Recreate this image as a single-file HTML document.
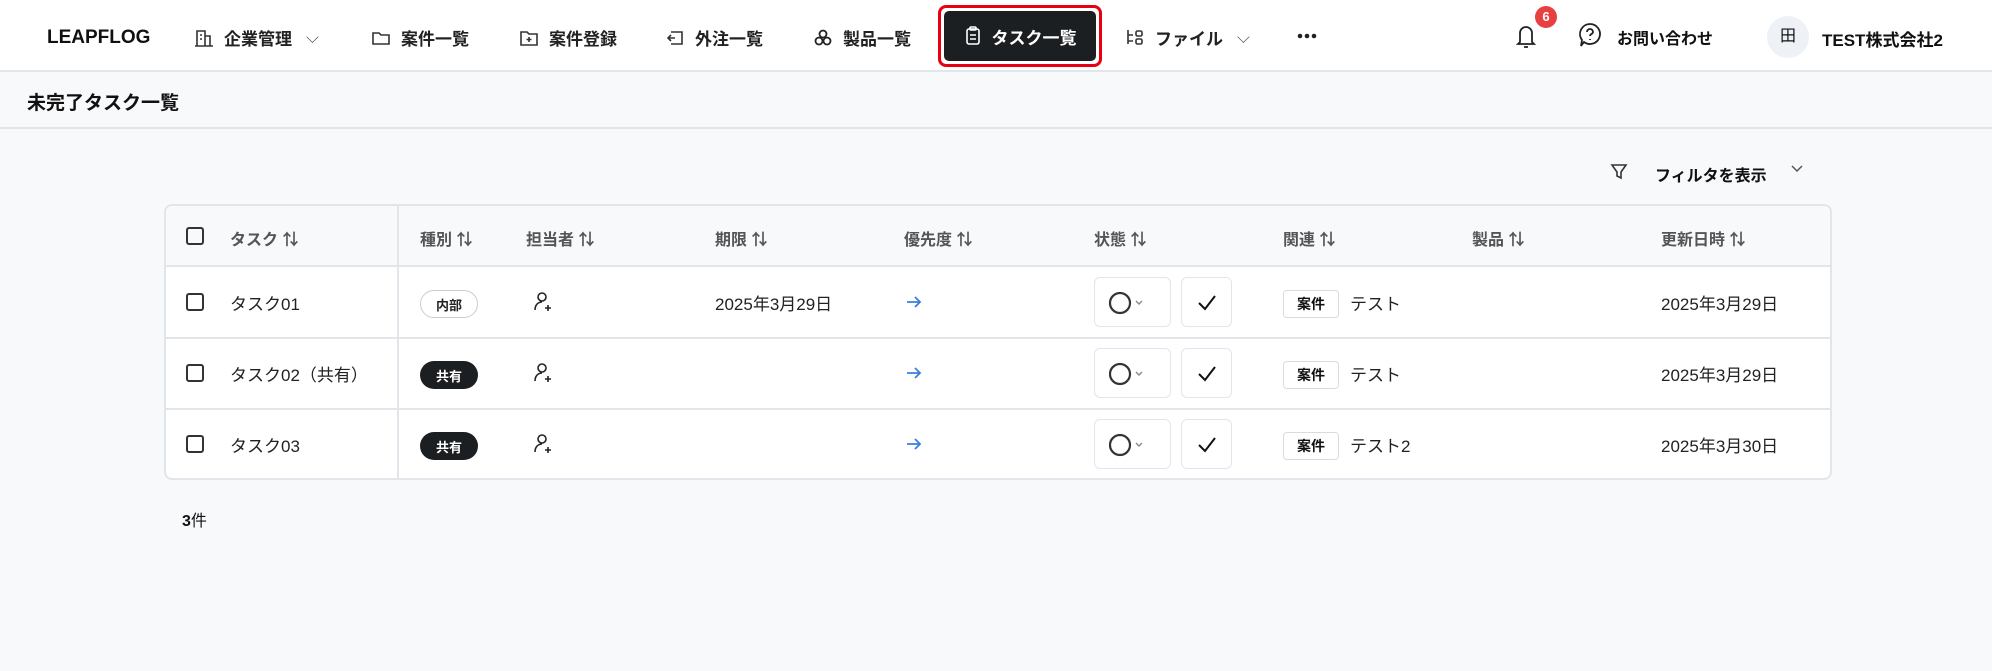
<!DOCTYPE html>
<html><head><meta charset="utf-8"><style>
*{box-sizing:border-box;margin:0;padding:0}
body{width:1992px;height:671px;background:#f8f9fb;font-family:"Liberation Sans","Noto Sans CJK JP",sans-serif;color:#111;position:relative;overflow:hidden;font-size:17px}
.a{position:absolute;white-space:nowrap}
.nav{position:absolute;left:0;top:0;width:1992px;height:72px;background:#fff;border-bottom:2px solid #e2e6ea}
.ni{position:absolute;top:25px;font-size:17px;font-weight:700;display:flex;align-items:center;gap:10px;color:#222}
svg{display:block}
.title{position:absolute;left:0;top:72px;width:1992px;height:57px;border-bottom:2px solid #e2e6ea;background:#f8f9fb}
.tbl{position:absolute;left:164px;top:204px;width:1668px;height:276px;border:2px solid #e2e6ea;border-radius:8px;background:#fff;overflow:hidden}
.hd{position:absolute;left:0;top:0;width:100%;height:61px;background:#f8f9fb;border-bottom:2px solid #e2e6ea}
.rl{position:absolute;left:0;width:100%;height:2px;background:#e2e6ea}
.h{position:absolute;top:20px;font-size:16px;color:#555;font-weight:700}
.cb{position:absolute;width:18px;height:18px;border:2px solid #333;border-radius:3px}
.tx{position:absolute;font-size:17px;color:#222}
.bd{position:absolute;width:58px;height:28px;border-radius:14px;font-size:13px;font-weight:700;display:flex;align-items:center;justify-content:center}
.sb{position:absolute;border:1.5px solid #e2e6ea;border-radius:6px;height:50px;background:#fff}
.kb{position:absolute;width:56px;height:28px;border:1.5px solid #d8dce0;border-radius:4px;font-size:14px;font-weight:700;display:flex;align-items:center;justify-content:center;background:#fff}
</style></head><body>
<div class="nav">
<div class="a" style="left:47px;top:27px;font-size:19px;font-weight:700">LEAPFLOG</div>
<div class="ni" style="left:194px"><svg width="20" height="20" viewBox="0 0 20 20" fill="none" stroke="#333" stroke-width="1.6"><path d="M3 18V3h8v15M11 8h5v10M1 18h18M6 7h2M6 11h2"/></svg>企業管理<span style="font-weight:400;color:#555;margin-left:4px">⌵</span></div>
<div class="ni" style="left:371px"><svg width="20" height="20" viewBox="0 0 20 20" fill="none" stroke="#333" stroke-width="1.6"><path d="M2 5h6l2 2h8v9H2z"/></svg>案件一覧</div>
<div class="ni" style="left:519px"><svg width="20" height="20" viewBox="0 0 20 20" fill="none" stroke="#333" stroke-width="1.6"><path d="M2 4h6l2 2h8v11H2zM10 9v5M7.5 11.5h5"/></svg>案件登録</div>
<div class="ni" style="left:665px"><svg width="20" height="20" viewBox="0 0 20 20" fill="none" stroke="#333" stroke-width="1.6"><path d="M6 4h11v12H6M10 10H3M6 7l-3 3 3 3"/></svg>外注一覧</div>
<div class="ni" style="left:813px"><svg width="20" height="20" viewBox="0 0 20 20" fill="none" stroke="#222" stroke-width="1.8"><circle cx="10" cy="6" r="3.5"/><circle cx="6" cy="13" r="3.5"/><circle cx="14" cy="13" r="3.5"/></svg>製品一覧</div>
<div class="a" style="left:938px;top:5px;width:164px;height:62px;border:3px solid #e60012;border-radius:8px;padding:3px"><div style="background:#1c1f21;height:100%;border-radius:5px;color:#fff;font-weight:700;font-size:17px;display:flex;align-items:center;justify-content:center;gap:10px"><svg width="18" height="20" viewBox="0 0 18 20" fill="none" stroke="#fff" stroke-width="1.6"><rect x="3" y="3" width="12" height="15" rx="2"/><rect x="6" y="1" width="6" height="3" rx="1"/><path d="M6 9h6M6 13h6"/></svg>タスク一覧</div></div>
<div class="ni" style="left:1125px"><svg width="20" height="20" viewBox="0 0 20 20" fill="none" stroke="#333" stroke-width="1.6"><path d="M3 2v14M3 7h5M3 13h5"/><rect x="11" y="3" width="6" height="5" rx="1.5"/><rect x="11" y="11" width="6" height="5" rx="1.5"/></svg>ファイル<span style="font-weight:400;color:#555;margin-left:4px">⌵</span></div>
<svg class="a" style="left:1297px;top:33px" width="20" height="6" viewBox="0 0 20 6" fill="#222"><circle cx="3" cy="3" r="2.3"/><circle cx="10" cy="3" r="2.3"/><circle cx="17" cy="3" r="2.3"/></svg>
<svg class="a" style="left:1514px;top:22px" width="24" height="30" viewBox="0 0 24 30" fill="none" stroke="#222" stroke-width="1.8"><path d="M6 20V11a6 6 0 0112 0v9l2 2H4zM10 25h4"/></svg>
<div class="a" style="left:1535px;top:6px;width:22px;height:22px;border-radius:11px;background:#e84040;color:#fff;font-size:13px;font-weight:700;text-align:center;line-height:22px">6</div>
<svg class="a" style="left:1577px;top:21px" width="26" height="30" viewBox="0 0 26 30" fill="none" stroke="#222" stroke-width="1.8"><path d="M13 3a10 10 0 11-6 18l-3 4 1-6A10 10 0 0113 3z"/><path d="M10 11a3 3 0 116 0c0 2-3 2-3 4M13 18v1"/></svg>
<div class="a" style="left:1617px;top:25px;font-size:16px;font-weight:700">お問い合わせ</div>
<div class="a" style="left:1767px;top:16px;width:42px;height:42px;border-radius:21px;background:#eef1f5;text-align:center;line-height:42px;font-size:16px">田</div>
<div class="a" style="left:1822px;top:26px;font-size:17px;font-weight:700">TEST株式会社2</div>
</div>
<div class="title"><div class="a" style="left:27px;top:16px;font-size:19px;font-weight:700">未完了タスク一覧</div></div>
<svg class="a" style="left:1610px;top:163px" width="18" height="18" viewBox="0 0 18 18" fill="none" stroke="#333" stroke-width="1.6"><path d="M2 2h14l-5 7v6l-4-2V9z"/></svg>
<div class="a" style="left:1655px;top:162px;font-size:16px;font-weight:700">フィルタを表示</div>
<svg class="a" style="left:1790px;top:164px" width="14" height="10" viewBox="0 0 14 10" fill="none" stroke="#555" stroke-width="1.5"><path d="M2 2l5 5 5-5"/></svg>
<div class="tbl">
<div class="hd"></div>
<div class="rl" style="top:131px"></div><div class="rl" style="top:202px"></div>
<div class="a" style="left:231px;top:0;width:2px;height:276px;background:#e2e6ea"></div>
<div class="cb" style="left:20px;top:21px"></div>
<div class="h" style="left:64px">タスク ⇅</div>
<div class="h" style="left:254px">種別 ⇅</div>
<div class="h" style="left:360px">担当者 ⇅</div>
<div class="h" style="left:549px">期限 ⇅</div>
<div class="h" style="left:738px">優先度 ⇅</div>
<div class="h" style="left:928px">状態 ⇅</div>
<div class="h" style="left:1117px">関連 ⇅</div>
<div class="h" style="left:1306px">製品 ⇅</div>
<div class="h" style="left:1495px">更新日時 ⇅</div>
<div class="cb" style="left:20px;top:87px"></div><div class="tx" style="left:64px;top:84px">タスク01</div>
<div class="bd" style="left:254px;top:84px;border:1.5px solid #ccc;color:#222">内部</div>
<div class="cb" style="left:20px;top:158px"></div><div class="tx" style="left:64px;top:155px">タスク02（共有）</div>
<div class="bd" style="left:254px;top:155px;background:#1c1f21;color:#fff">共有</div>
<div class="cb" style="left:20px;top:229px"></div><div class="tx" style="left:64px;top:226px">タスク03</div>
<div class="bd" style="left:254px;top:226px;background:#1c1f21;color:#fff">共有</div>
<div class="tx" style="left:549px;top:84px">2025年3月29日</div>
<div class="tx" style="left:1495px;top:84px">2025年3月29日</div>
<div class="tx" style="left:1495px;top:155px">2025年3月29日</div>
<div class="tx" style="left:1495px;top:226px">2025年3月30日</div>
<div class="kb" style="left:1117px;top:84px">案件</div><div class="tx" style="left:1184px;top:84px">テスト</div>
<div class="kb" style="left:1117px;top:155px">案件</div><div class="tx" style="left:1184px;top:155px">テスト</div>
<div class="kb" style="left:1117px;top:226px">案件</div><div class="tx" style="left:1184px;top:226px">テスト2</div>
</div>
<div class="a" style="left:182px;top:507px;font-size:16px;font-weight:700">3<span style="font-weight:400">件</span></div>
<svg class="a" style="left:533px;top:291px" width="22" height="22" viewBox="0 0 22 22" fill="none" stroke="#222" stroke-width="1.6"><circle cx="9" cy="6" r="4"/><path d="M2 19c0-5 3-8 7-8M15 14v6M12 17h6"/></svg>
<svg class="a" style="left:533px;top:362px" width="22" height="22" viewBox="0 0 22 22" fill="none" stroke="#222" stroke-width="1.6"><circle cx="9" cy="6" r="4"/><path d="M2 19c0-5 3-8 7-8M15 14v6M12 17h6"/></svg>
<svg class="a" style="left:533px;top:433px" width="22" height="22" viewBox="0 0 22 22" fill="none" stroke="#222" stroke-width="1.6"><circle cx="9" cy="6" r="4"/><path d="M2 19c0-5 3-8 7-8M15 14v6M12 17h6"/></svg>
<svg class="a" style="left:905px;top:293px" width="18" height="18" viewBox="0 0 18 18" fill="none" stroke="#3a7fe0" stroke-width="1.8"><path d="M2 9h13M10 4l5 5-5 5"/></svg>
<svg class="a" style="left:905px;top:364px" width="18" height="18" viewBox="0 0 18 18" fill="none" stroke="#3a7fe0" stroke-width="1.8"><path d="M2 9h13M10 4l5 5-5 5"/></svg>
<svg class="a" style="left:905px;top:435px" width="18" height="18" viewBox="0 0 18 18" fill="none" stroke="#3a7fe0" stroke-width="1.8"><path d="M2 9h13M10 4l5 5-5 5"/></svg>
<div class="sb" style="left:1094px;top:277px;width:77px"><svg style="position:absolute;left:14px;top:13px" width="40" height="24" viewBox="0 0 40 24" fill="none" stroke="#333"><circle cx="11" cy="12" r="10" stroke-width="2.2"/><path d="M27 10l3 3 3-3" stroke="#888" stroke-width="1.4"/></svg></div>
<div class="sb" style="left:1181px;top:277px;width:51px"><svg style="position:absolute;left:14px;top:14px" width="22" height="22" viewBox="0 0 22 22" fill="none" stroke="#111" stroke-width="2"><path d="M3 11l6 6L19 4"/></svg></div>
<div class="sb" style="left:1094px;top:348px;width:77px"><svg style="position:absolute;left:14px;top:13px" width="40" height="24" viewBox="0 0 40 24" fill="none" stroke="#333"><circle cx="11" cy="12" r="10" stroke-width="2.2"/><path d="M27 10l3 3 3-3" stroke="#888" stroke-width="1.4"/></svg></div>
<div class="sb" style="left:1181px;top:348px;width:51px"><svg style="position:absolute;left:14px;top:14px" width="22" height="22" viewBox="0 0 22 22" fill="none" stroke="#111" stroke-width="2"><path d="M3 11l6 6L19 4"/></svg></div>
<div class="sb" style="left:1094px;top:419px;width:77px"><svg style="position:absolute;left:14px;top:13px" width="40" height="24" viewBox="0 0 40 24" fill="none" stroke="#333"><circle cx="11" cy="12" r="10" stroke-width="2.2"/><path d="M27 10l3 3 3-3" stroke="#888" stroke-width="1.4"/></svg></div>
<div class="sb" style="left:1181px;top:419px;width:51px"><svg style="position:absolute;left:14px;top:14px" width="22" height="22" viewBox="0 0 22 22" fill="none" stroke="#111" stroke-width="2"><path d="M3 11l6 6L19 4"/></svg></div>
</body></html>
